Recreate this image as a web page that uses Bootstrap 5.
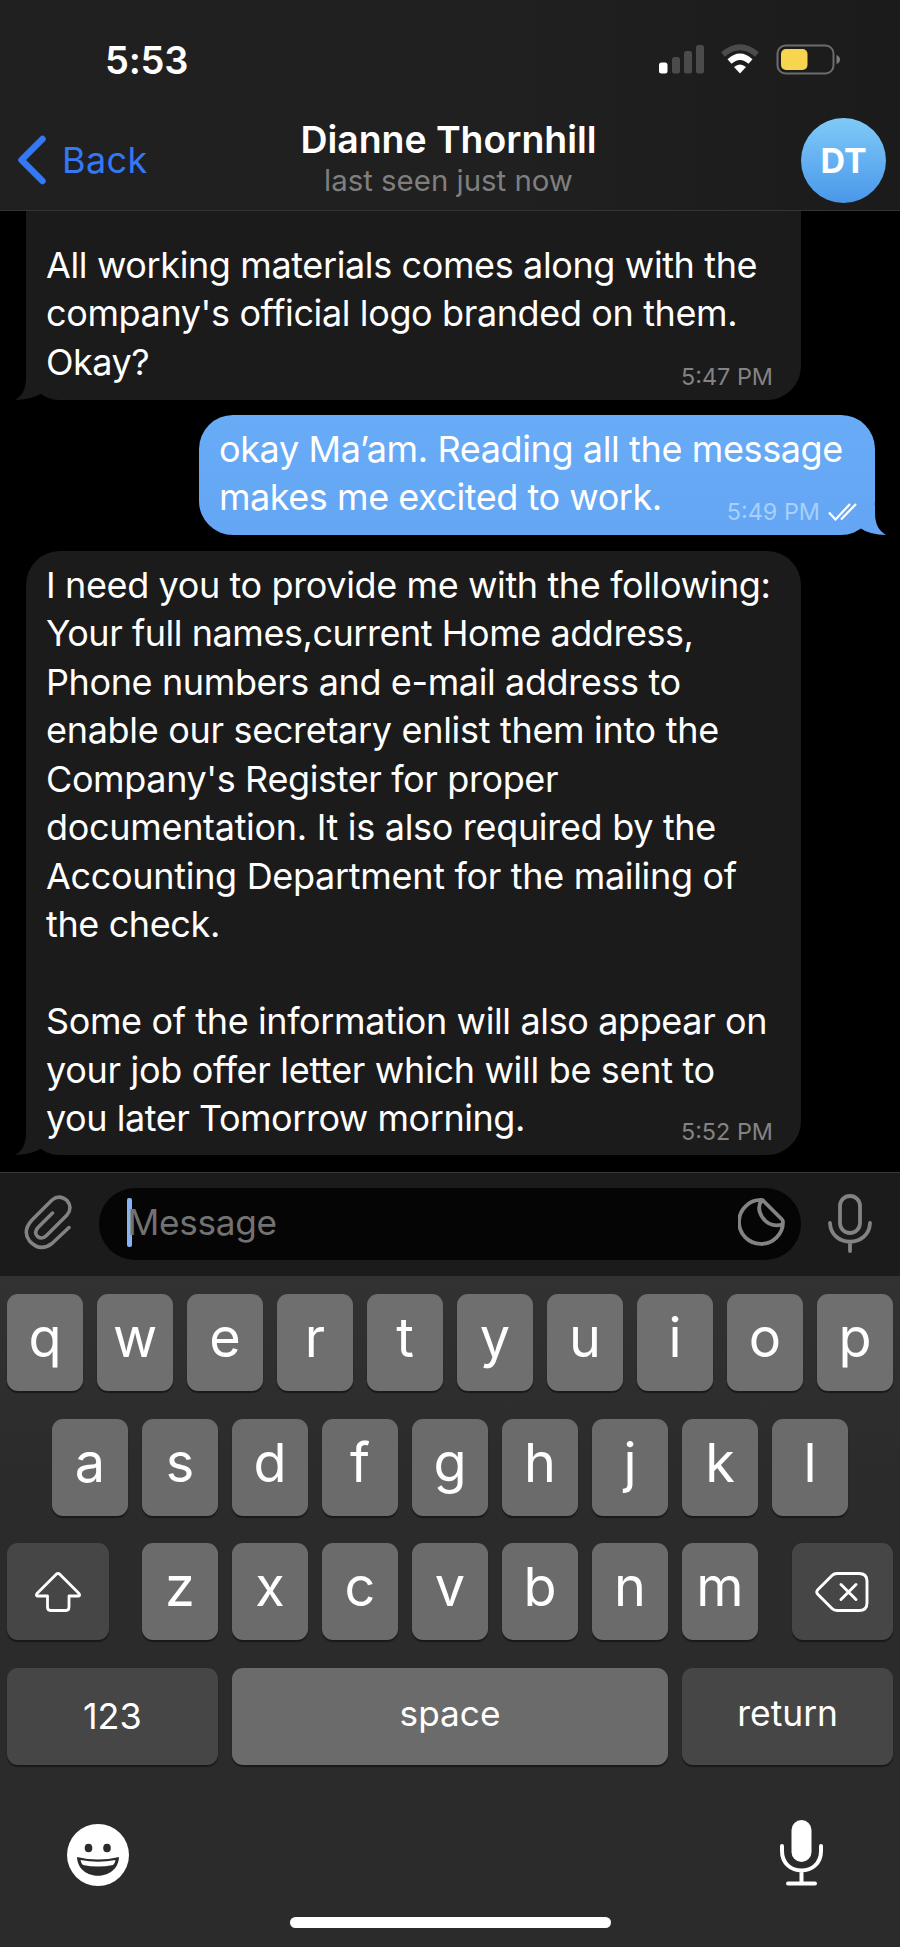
<!DOCTYPE html>
<html lang="en" data-bs-theme="dark">
<head>
<meta charset="utf-8">
<meta name="viewport" content="width=device-width, initial-scale=1">
<title>Chat</title>
<link href="https://cdn.jsdelivr.net/npm/bootstrap@5.3.0/dist/css/bootstrap.min.css" rel="stylesheet">
<style>
  body { width: 900px; height: 1947px; background: #000; color: #fff; font-family: Inter, "Liberation Sans", sans-serif; overflow: hidden; }
  svg { display: block; }
  .top-area { height: 211px; background: linear-gradient(90deg, #202020 55%, #1b1b1b); border-bottom: 1px solid #343434; }
  .status { height: 106px; padding: 14px 58px 0 105px; }
  .clock { font-size: 38px; font-weight: 600; line-height: 1; letter-spacing: -.2px; }
  .navrow { height: 104px; grid-template-columns: 237px 1fr 243px; padding: 3px 14px 0 17px; }
  .back { color: #3478f6; font-size: 36px; line-height: 1; letter-spacing: .4px; }
  .who { font-size: 37.4px; font-weight: 600; line-height: 42px; white-space: nowrap; }
  .seen { font-size: 29.4px; line-height: 40px; color: #7f7f7f; white-space: nowrap; }
  .avatar { width: 85px; height: 85px; font: 700 34px/1 Inter, sans-serif; background: linear-gradient(#7fcaf8, #4a97ea); margin-top: 2px; }
  .chat { height: 961px; }
  .bubble { position: relative; isolation: isolate; line-height: 48.47px; font-size: 36px; letter-spacing: -.38px; }
  .ln { display: table; white-space: nowrap; }
  .loose { letter-spacing: -.31px; }
  .tight { letter-spacing: -.46px; }
  .incoming { width: 775px; margin-left: 26px; background: #1b1b1b; border-radius: 34px; padding-left: 20px; }
  .outgoing { width: 676px; margin-left: 199px; background: linear-gradient(#68abf7, #64a6f3); border-radius: 34px; padding: 10px 0 0 20px; height: 120px; margin-top: 15px; }
  .first { height: 189px; border-radius: 0 0 34px 34px; padding-top: 30px; }
  .third { height: 604px; margin-top: 16px; padding-top: 10px; }
  .stamp { position: absolute; font-size: 23.4px; letter-spacing: 0; line-height: 24px; right: 28px; bottom: 11px; color: #838383; white-space: nowrap; }
  .outgoing .stamp { color: #a9d0fb; right: 18px; bottom: 11px; }
  .tail { position: absolute; bottom: 0; z-index: -1; }
  .incoming .tail { left: -11px; }
  .outgoing .tail { right: -11px; }
  .composer { height: 104px; background: #1b1b1b; border-top: 1px solid #3a3a3a; padding: 0 28px 1px 24px; }
  .field { width: 702px; height: 72px; background: #050505; border-radius: 36px; padding: 0 16px 4px 28px; color: #727272; font-size: 35.2px; letter-spacing: -.3px; margin-right: 2px; }
  .caret { width: 5px; height: 49px; border-radius: 2px; background: #87b3f5; margin-right: -4px; }
  .clip, .talk { margin-bottom: 2px; }
  .keyboard { height: 671px; background: linear-gradient(#323232, #2b2b2b 200px); padding: 18px 7px 0; }
  .keyrow { height: 97px; margin-bottom: 27.6px; gap: 14px; }
  .key { width: 76px; height: 97px; border-radius: 11px; background: #6b6b6b; box-shadow: 0 2px 1px #191919; font-size: 54px; font-weight: 400; line-height: 1; padding-bottom: 9px; }
  .keyrow:first-child .key { background: #6f6f6f; }
  .key.alt { background: #464646; padding-bottom: 0; }
  .key.wide { width: 211px; font-size: 36px; }
  .key.enter { padding-bottom: 5px; font-size: 35.4px; }
  .key.edge { width: 101.5px; }
  .key.bar { width: 437px; font-size: 35.2px; padding-bottom: 6px; }
  .tools { padding: 28px 70px 0 60px; }
  .emoji { margin-top: 4px; }
  .home { width: 321px; height: 11px; border-radius: 6px; background: #fff; margin-top: 31px; }
</style>
</head>
<body class="m-0">
<header class="top-area">
  <div class="status d-flex justify-content-between align-items-center">
    <div class="clock">5:53</div>
    <svg width="184" height="32" viewBox="0 0 184 32">
      <rect x="1" y="18.500" width="8.500" height="11" rx="2.500" fill="#fff"/>
      <rect x="14" y="13" width="8" height="16.500" rx="2.500" fill="#4b4b4b"/>
      <rect x="26" y="7" width="8" height="22.500" rx="2.500" fill="#4b4b4b"/>
      <rect x="38" y="1" width="8" height="28.500" rx="2.500" fill="#4b4b4b"/>
      <path d="M65 10.500Q82 -4 99 10.500" fill="none" stroke="#4b4b4b" stroke-width="6"/>
      <path d="M71.500 17.500Q82 8 92.500 17.500" fill="none" stroke="#fff" stroke-width="6"/>
      <path d="M82 29.500L76 23Q82 18 88 23Z" fill="#fff"/>
      <rect x="119.500" y="1.500" width="56" height="28" rx="8" fill="none" stroke="#6c6c6c" stroke-width="2"/>
      <rect x="123" y="5" width="26.500" height="21" rx="5" fill="#f7d54e"/>
      <path d="M178.500 11Q182 12.500 182 15.500Q182 18.500 178.500 20Z" fill="#7c7c7c"/>
    </svg>
  </div>
  <div class="navrow d-grid align-items-center">
    <div class="back d-flex align-items-center">
      <svg width="29" height="50" viewBox="0 0 29 50"><path d="M25.500 4L4.500 25L25.500 46" fill="none" stroke="#3478f6" stroke-width="6.500" stroke-linecap="round" stroke-linejoin="round"/></svg>
      <span class="ms-3">Back</span>
    </div>
    <div class="text-center">
      <div class="who">Dianne Thornhill</div>
      <div class="seen">last seen just now</div>
    </div>
    <div class="avatar rounded-circle d-flex align-items-center justify-content-center ms-auto">DT</div>
  </div>
</header>

<main class="chat">
  <div class="bubble incoming first">
    <span class="ln">All working materials comes along with the</span>
    <span class="ln">company's official logo branded on them.</span>
    <span class="ln tight">Okay?</span>
    <span class="stamp">5:47 PM</span>
    <svg class="tail" width="60" height="30" viewBox="0 0 60 30"><path d="M11 0H30V24L27 23Q16 30 0 30Q11 24 11 8Z" fill="#1b1b1b"/></svg>
  </div>
  <div class="bubble outgoing">
    <span class="ln">okay Ma’am. Reading all the message</span>
    <span class="ln tight">makes me excited to work.</span>
    <span class="stamp d-flex align-items-center">5:49 PM
      <svg class="ms-2" width="29" height="18" viewBox="0 0 29 18"><path d="M1 9.500L7.500 16.500L22 1M13 16.500L28 1" fill="none" stroke="#fff" stroke-width="2.200"/></svg></span>
    <svg class="tail" width="60" height="30" viewBox="0 0 60 30"><path d="M49 0H30V24L34 23Q44 30 60 30Q49 24 49 8Z" fill="#64a6f3"/></svg>
  </div>
  <div class="bubble incoming third">
    <span class="ln">I need you to provide me with the following:</span>
    <span class="ln tight">Your full names,current Home address,</span>
    <span class="ln">Phone numbers and e-mail address to</span>
    <span class="ln loose">enable our secretary enlist them into the</span>
    <span class="ln">Company's Register for proper</span>
    <span class="ln loose">documentation. It is also required by the</span>
    <span class="ln loose">Accounting Department for the mailing of</span>
    <span class="ln">the check.</span>
    <span class="ln">&nbsp;</span>
    <span class="ln">Some of the information will also appear on</span>
    <span class="ln loose">your job offer letter which will be sent to</span>
    <span class="ln tight">you later Tomorrow morning.</span>
    <span class="stamp">5:52 PM</span>
    <svg class="tail" width="60" height="30" viewBox="0 0 60 30"><path d="M11 0H30V24L27 23Q16 30 0 30Q11 24 11 8Z" fill="#1b1b1b"/></svg>
  </div>
</main>

<div class="composer d-flex align-items-center justify-content-between">
  <svg class="clip" width="49" height="56" viewBox="0 0 49 56"><path d="M28.500 18L14 32.500Q9.500 37.500 13.500 41.500Q18 45 22.500 40.500L43 20Q49 12.500 43 5.500Q35.500 -1 28 5L8 25Q-2 36 5.500 46Q16 57.500 28 48.500L45 32.500" fill="none" stroke="#838383" stroke-width="3.500" stroke-linecap="round"/></svg>
  <div class="field d-flex align-items-center">
    <span class="caret"></span><span>Message</span>
    <svg class="ms-auto" width="47" height="48" viewBox="0 0 47 48"><path d="M24 2A22 22 0 1 0 45 24Q45 22.500 44 21.500L26 3.500Q25 2 24 2Q18 10 24.500 19.500Q32 30 44.500 26.500" fill="none" stroke="#838383" stroke-width="3.800" stroke-linejoin="round"/></svg>
  </div>
  <svg class="talk" width="44" height="60" viewBox="0 0 44 60"><g fill="none" stroke="#838383" stroke-width="3.800" stroke-linecap="round"><rect x="12" y="3" width="20" height="37" rx="10"/><path d="M2 30C3 55 41 55 42 30M22 49V58"/></g></svg>
</div>

<section class="keyboard">
  <div class="keyrow d-flex justify-content-center" data-keys="qwertyuiop"></div>
  <div class="keyrow d-flex justify-content-center" data-keys="asdfghjkl"></div>
  <div class="keyrow d-flex justify-content-between">
    <div class="key alt edge d-flex align-items-center justify-content-center"><svg width="46" height="40" viewBox="0 0 46 40"><path d="M21.500 2Q23 1 24.500 2L44 21.500Q45.500 24 43 24H34V35Q34 38.500 31 38.500H15.500Q12.500 38.500 12.500 35V24H3Q.5 24 2 21.500Z" fill="none" stroke="#fff" stroke-width="2.800" stroke-linejoin="round"/></svg></div>
    <div class="keyrow d-flex m-0" data-keys="zxcvbnm"></div>
    <div class="key alt edge d-flex align-items-center justify-content-center"><svg width="54" height="40" viewBox="0 0 54 40"><path d="M17 3.500Q19 1.500 22 1.500H44Q52 1.500 52 9V31Q52 38.500 44 38.500H22Q19 38.500 17 36.500L2.500 22Q1 20 2.500 18ZM26 12.500L41 27.500M41 12.500L26 27.500" fill="none" stroke="#fff" stroke-width="2.900" stroke-linecap="round" stroke-linejoin="round"/></svg></div>
  </div>
  <div class="keyrow d-flex">
    <div class="key alt wide d-flex align-items-center justify-content-center">123</div>
    <div class="key bar d-flex align-items-center justify-content-center">space</div>
    <div class="key alt wide enter d-flex align-items-center justify-content-center">return</div>
  </div>
  <div class="tools d-flex justify-content-between">
    <svg class="emoji" width="62" height="62" viewBox="0 0 62 62"><circle cx="31" cy="31" r="31" fill="#fff"/><ellipse cx="21.500" cy="24" rx="3.800" ry="4.300" fill="#2b2b2b"/><ellipse cx="40" cy="24" rx="3.800" ry="4.300" fill="#2b2b2b"/><path d="M10 33Q31 38 52 33C51 58 11 58 10 33Z" fill="#2b2b2b"/><path d="M13.500 36Q31 39.500 48.500 36Q48 39.500 46 41Q31 44 16 41Q14 39.500 13.500 36Z" fill="#fff"/></svg>
    <svg width="43" height="66" viewBox="0 0 43 66"><rect x="11.500" y="0" width="20" height="42" rx="10" fill="#fff"/><path d="M2 26V31C2 57 41 57 41 31V26M21.500 51V62M8 63.500H35" fill="none" stroke="#fff" stroke-width="4" stroke-linecap="round"/></svg>
  </div>
  <div class="home mx-auto"></div>
</section>
<script src="https://cdn.jsdelivr.net/npm/bootstrap@5.3.0/dist/js/bootstrap.bundle.min.js"></script>
<script>
  document.querySelectorAll('[data-keys]').forEach(row => {
    for (const letter of row.dataset.keys) {
      const key = document.createElement('div');
      key.className = 'key d-flex align-items-center justify-content-center';
      key.textContent = letter;
      row.append(key);
    }
  });
</script>
</body>
</html>
